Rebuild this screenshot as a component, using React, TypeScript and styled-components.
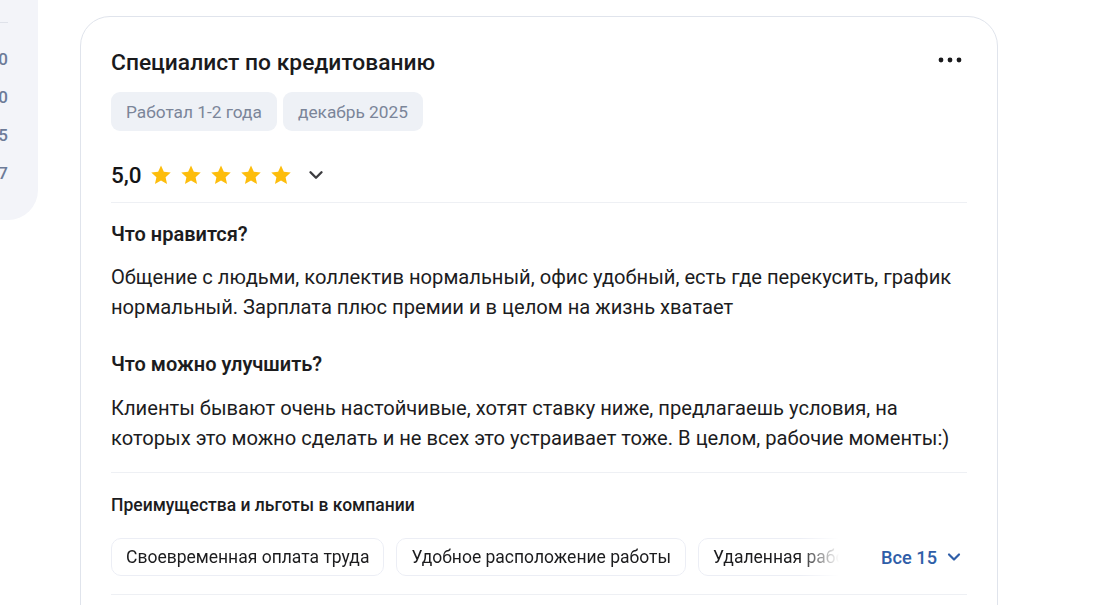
import React from "react";
import styled, { createGlobalStyle } from "styled-components";

const Global = createGlobalStyle`
  html, body { margin: 0; padding: 0; background: #ffffff; }
  body { font-family: Roboto, "Noto Sans", Arial, sans-serif; color: #1c1c1e; -webkit-font-smoothing: antialiased; }
  * { box-sizing: border-box; }
`;

const Page = styled.div`
  display: flex;
  align-items: flex-start;
  width: 1112px;
  height: 605px;
  overflow: hidden;
`;

const SidePanel = styled.aside`
  flex: none;
  width: 300px;
  margin-left: -262px;
  height: 220px;
  background: #f3f4f9;
  border-bottom-right-radius: 30px;
  padding: 22px 30px 0 20px;
`;

const SideRule = styled.div`
  height: 1px;
  background: #dfe2ea;
  margin-bottom: 26px;
`;

const SideRow = styled.div`
  display: flex;
  justify-content: space-between;
  height: 38px;
  align-items: flex-start;
  font-size: 17px;
  font-weight: 500;
  color: #6d7b98;
`;

const Card = styled.section`
  flex: none;
  margin-left: 42px;
  margin-top: 16px;
  width: 918px;
  height: 620px;
  border: 1px solid #e0e4ec;
  border-radius: 30px;
  padding: 32px 30px 0 30px;
  background: #fff;
`;

const HeadRow = styled.div`
  display: flex;
  align-items: center;
  justify-content: space-between;
  height: 28px;
`;

const Title = styled.h2`
  margin: 0;
  font-size: 22.8px;
  font-weight: 500;
  line-height: 28px;
  color: #1a1a1c;
`;

const MoreButton = styled.button`
  border: 0;
  background: none;
  padding: 0;
  width: 28px;
  height: 24px;
  margin-right: 3px;
  margin-top: -6px;
  display: flex;
  align-items: center;
  justify-content: center;
  cursor: pointer;
`;

const TagRow = styled.div`
  display: flex;
  gap: 6px;
  margin-top: 15px;
`;

const Tag = styled.span`
  display: inline-flex;
  align-items: center;
  height: 39px;
  padding: 0 15px;
  border-radius: 9px;
  background: #eef1f6;
  color: #7b8599;
  font-size: 17.3px;
`;

const RatingRow = styled.div`
  display: flex;
  align-items: center;
  height: 30px;
  margin-top: 29px;
`;

const Score = styled.span`
  font-size: 22.5px;
  font-weight: 500;
  color: #141416;
  margin-right: 8px;
`;

const Stars = styled.div`
  display: flex;
  gap: 8px;
`;

const Chevron = styled.span<{ $gap: number }>`
  display: inline-flex;
  margin-left: ${(p) => p.$gap}px;
`;

const Rule = styled.hr<{ $top: number }>`
  border: 0;
  height: 1px;
  background: #eef0f4;
  margin: ${(p) => p.$top}px 0 0 0;
`;

const Heading = styled.h3<{ $top: number }>`
  margin: ${(p) => p.$top}px 0 0 0;
  font-size: 20px;
  font-weight: 600;
  line-height: 24px;
  color: #1c1c1e;
`;

const Paragraph = styled.p<{ $top: number }>`
  margin: ${(p) => p.$top}px 0 0 0;
  font-size: 20.15px;
  line-height: 30px;
  color: #1c1c1e;
`;

const SubHeading = styled.h4`
  margin: 22px 0 0 0;
  font-size: 17.5px;
  font-weight: 500;
  line-height: 20px;
  color: #1c1c1e;
`;

const BenefitRow = styled.div`
  display: flex;
  align-items: center;
  margin-top: 23px;
`;

const BenefitScroller = styled.div`
  flex: 1;
  min-width: 0;
  display: flex;
  gap: 12px;
  overflow: hidden;
  -webkit-mask-image: linear-gradient(to right, #000 calc(100% - 45px), transparent calc(100% - 6px));
  mask-image: linear-gradient(to right, #000 calc(100% - 45px), transparent calc(100% - 6px));
`;

const Benefit = styled.span`
  flex: none;
  display: inline-flex;
  align-items: center;
  height: 38px;
  padding: 0 14px;
  border: 1px solid #eceef5;
  border-radius: 10px;
  font-size: 17.5px;
  color: #1c1c1e;
  white-space: nowrap;
`;

const AllButton = styled.button`
  flex: none;
  display: flex;
  align-items: center;
  gap: 7px;
  border: 0;
  background: none;
  padding: 0 3px 0 36px;
  font-family: inherit;
  font-size: 18.2px;
  font-weight: 500;
  color: #2f5ea8;
  cursor: pointer;
`;

const Star = () => (
  <svg width="22" height="22" viewBox="0 0 24 24">
    <path
      d="M12 1.6l3.1 6.9 7.5.8-5.6 5.1 1.6 7.4L12 18l-6.6 3.8 1.6-7.4-5.6-5.1 7.5-.8z"
      fill="#fdbd0c"
    />
  </svg>
);

const ChevronDown = ({ color, size }: { color: string; size: number }) => (
  <svg width={size} height={size} viewBox="0 0 24 24" fill="none">
    <path d="M6 9l6 6 6-6" stroke={color} strokeWidth="2.6" strokeLinecap="round" strokeLinejoin="round" />
  </svg>
);

const Dots = () => (
  <svg width="24" height="6" viewBox="0 0 24 6">
    <circle cx="3" cy="3" r="2.4" fill="#1a1a1c" />
    <circle cx="12" cy="3" r="2.4" fill="#1a1a1c" />
    <circle cx="21" cy="3" r="2.4" fill="#1a1a1c" />
  </svg>
);

const sideStats = [
  { label: "Условия", value: "5,0" },
  { label: "Коллектив", value: "5,0" },
  { label: "Зарплата", value: "4,5" },
  { label: "Рост", value: "4,7" },
];

const benefits = [
  "Своевременная оплата труда",
  "Удобное расположение работы",
  "Удаленная работа",
  "ДМС",
];

export default function App() {
  return (
    <>
      <Global />
      <Page>
        <SidePanel>
          <SideRule />
          {sideStats.map((s) => (
            <SideRow key={s.label}>
              <span>{s.label}</span>
              <span>{s.value}</span>
            </SideRow>
          ))}
        </SidePanel>
        <Card>
          <HeadRow>
            <Title>Специалист по кредитованию</Title>
            <MoreButton aria-label="Ещё">
              <Dots />
            </MoreButton>
          </HeadRow>
          <TagRow>
            <Tag>Работал 1-2 года</Tag>
            <Tag>декабрь 2025</Tag>
          </TagRow>
          <RatingRow>
            <Score>5,0</Score>
            <Stars>
              {[0, 1, 2, 3, 4].map((i) => (
                <Star key={i} />
              ))}
            </Stars>
            <Chevron $gap={13}>
              <ChevronDown color="#3c3c40" size={22} />
            </Chevron>
          </RatingRow>
          <Rule $top={12} />
          <Heading $top={19}>Что нравится?</Heading>
          <Paragraph $top={16}>
            Общение с людьми, коллектив нормальный, офис удобный, есть где перекусить, график
            нормальный. Зарплата плюс премии и в целом на жизнь хватает
          </Paragraph>
          <Heading $top={30}>Что можно улучшить?</Heading>
          <Paragraph $top={17}>
            Клиенты бывают очень настойчивые, хотят ставку ниже, предлагаешь условия, на
            которых это можно сделать и не всех это устраивает тоже. В целом, рабочие моменты:)
          </Paragraph>
          <Rule $top={19} />
          <SubHeading>Преимущества и льготы в компании</SubHeading>
          <BenefitRow>
            <BenefitScroller>
              {benefits.map((b) => (
                <Benefit key={b}>{b}</Benefit>
              ))}
            </BenefitScroller>
            <AllButton>
              Все 15
              <ChevronDown color="#2f5ea8" size={20} />
            </AllButton>
          </BenefitRow>
          <Rule $top={18} />
        </Card>
      </Page>
    </>
  );
}
